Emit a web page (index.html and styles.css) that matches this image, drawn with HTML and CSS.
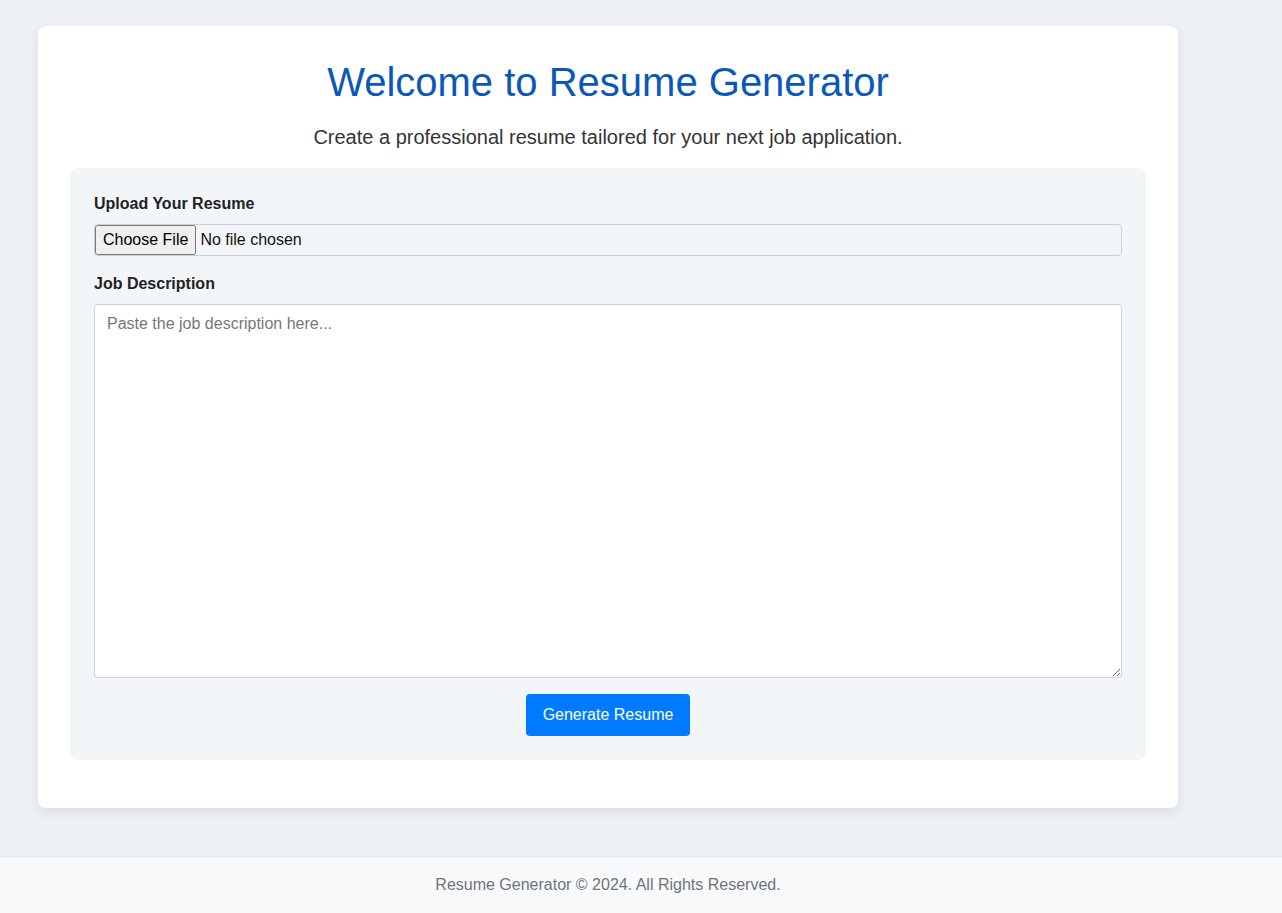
FILE: index.html
```html
<!DOCTYPE html>
<html lang="en">
<head>
<meta charset="utf-8">
<title>Resume Generator</title>
<link rel="stylesheet" href="styles.css">
</head>
<body>
<main class="page">
  <section class="card">
    <h1 class="title">Welcome to Resume Generator</h1>
    <p class="subtitle">Create a professional resume tailored for your next job application.</p>
    <form class="form-box">
      <label class="label" for="resume">Upload Your Resume</label>
      <input class="file-input" type="file" id="resume">
      <label class="label" for="jd">Job Description</label>
      <textarea class="textarea" id="jd" placeholder="Paste the job description here..."></textarea>
      <div class="actions">
        <button type="button" class="btn">Generate Resume</button>
      </div>
    </form>
  </section>
</main>
<footer class="footer">Resume Generator © 2024. All Rights Reserved.</footer>
</body>
</html>
```
FILE: styles.css
```css
* { box-sizing: border-box; }
html, body { margin: 0; padding: 0; }
body {
  background: #edf0f5;
  font-family: "Liberation Sans", Arial, sans-serif;
  color: #333;
  min-height: 913px;
  display: flex;
  flex-direction: column;
}
.page {
  flex: 1;
  padding: 26px 0 48px 38px;
}
.card {
  width: 1140px;
  background: #fff;
  border-radius: 8px;
  padding: 32px 32px 48px;
  box-shadow: 0 4px 12px rgba(0, 0, 0, 0.08);
}
.title {
  margin: 0 0 16px;
  font-size: 40px;
  line-height: 48px;
  font-weight: 400;
  color: #0a58b8;
  text-align: center;
}
.subtitle {
  margin: 0 0 16px;
  font-size: 20px;
  line-height: 30px;
  text-align: center;
  color: #333;
}
.form-box {
  background: #f3f6f9;
  border-radius: 8px;
  padding: 24px;
  display: flex;
  flex-direction: column;
}
.label {
  display: block;
  font-weight: 700;
  font-size: 16px;
  line-height: 24px;
  color: #222;
  margin-bottom: 8px;
}
.file-input {
  display: block;
  width: 100%;
  height: 32px;
  padding: 0;
  border: 1px solid #ccd1d8;
  border-radius: 4px;
  font-family: "Liberation Sans", Arial, sans-serif;
  font-size: 16px;
  color: #111;
  background: transparent;
  margin-bottom: 16px;
}
.file-input::file-selector-button {
  font-family: "Liberation Sans", Arial, sans-serif;
  font-size: 16px;
  height: 30px;
  margin-right: 4px;
}
.textarea {
  display: block;
  width: 100%;
  height: 374px;
  padding: 10px 12px;
  border: 1px solid #ccd1d8;
  border-radius: 4px;
  font-family: "Liberation Sans", Arial, sans-serif;
  font-size: 16px;
  color: #222;
  background: #fff;
  margin: 0 0 16px;
}
.textarea::placeholder { color: #777; }
.actions {
  display: flex;
  justify-content: center;
}
.btn {
  background: #007bff;
  color: #fff;
  border: none;
  border-radius: 4px;
  height: 42px;
  padding: 0 17px;
  font-family: "Liberation Sans", Arial, sans-serif;
  font-size: 16px;
  cursor: pointer;
}
.footer {
  background: #f8f9fa;
  border-top: 1px solid #e3e6ea;
  text-align: center;
  color: #6c757d;
  font-size: 16px;
  line-height: 20px;
  padding: 18px 66px 19px 0;
}
```
